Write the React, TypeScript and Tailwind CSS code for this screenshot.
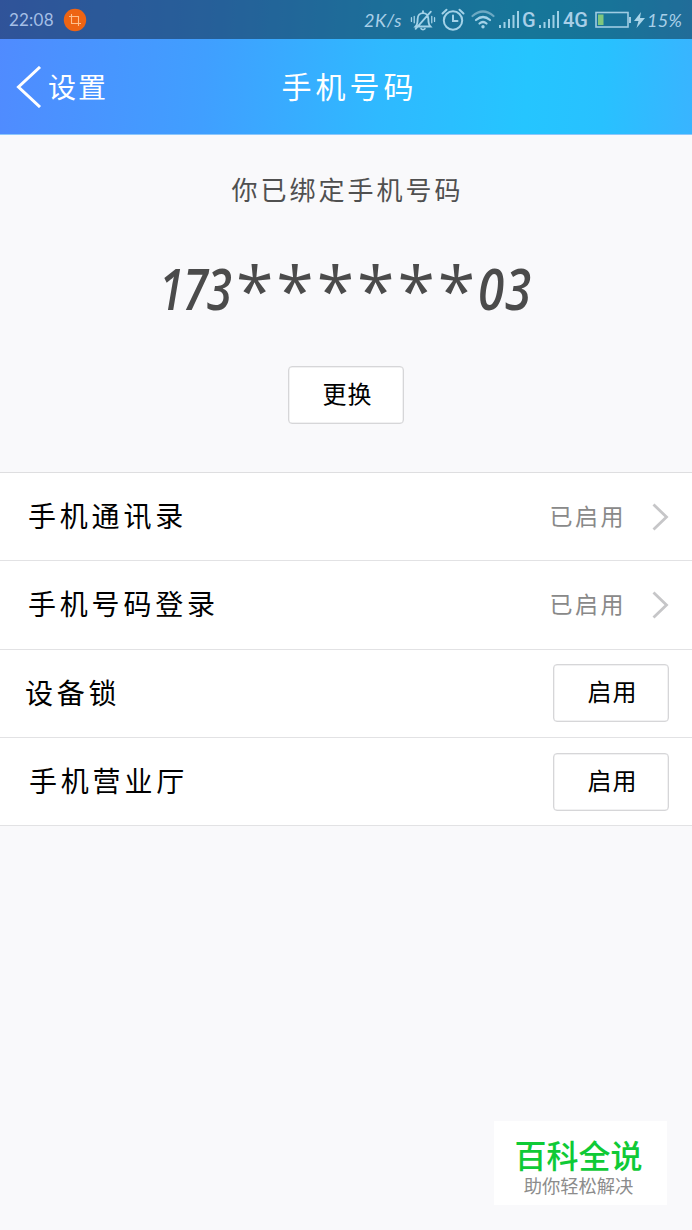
import React from "react";

const hand = "font-['Noto_Sans_CJK_SC',sans-serif]";

function Signal() {
  return (
    <svg width="21" height="20" viewBox="0 0 21 20" fill="#9fd0e6" className="shrink-0">
      <rect x="0" y="15" width="2" height="3" />
      <rect x="4.5" y="12" width="2" height="6" />
      <rect x="9" y="9" width="2" height="9" />
      <rect x="13.5" y="5" width="2" height="13" />
      <rect x="18" y="1" width="2" height="17" />
    </svg>
  );
}

function StatusBar() {
  return (
    <div className="flex h-[39px] items-center bg-black/40 pl-[9px] text-[#a9cfe8]">
      <span className="w-[54px] whitespace-nowrap font-['Lato',sans-serif] text-[17px] leading-none tracking-[0.2px] text-[#a5bfe6]">22:08</span>
      <svg width="24" height="24" viewBox="0 0 24 24" fill="none" className="shrink-0">
        <circle cx="12" cy="12" r="11.2" fill="#ee6413" />
        <path d="M8.500 6v9.500H18M6 8.500h9.500V18" stroke="#ffc08c" strokeWidth="1.1" />
      </svg>
      <span className="ml-[277px] w-[46px] whitespace-nowrap font-['Lato',sans-serif] text-[18px] italic leading-none tracking-[0.6px]">2K/s</span>
      <svg width="26" height="24" viewBox="0 0 28 26" fill="none" stroke="#a3d2e8" strokeWidth="2" strokeLinecap="round" className="shrink-0">
        <path d="M6 20c2-2 2.200-4 2.200-8 0-4 2.500-6.500 5.800-6.500s5.800 2.500 5.800 6.500c0 4 .2 6 2.200 8zM12 22.500c1 1.200 3 1.200 4 0M14 5.500V3.500M6 22.500 22.500 4" />
        <path d="M4.500 9v7M1.500 10.500v4M23.500 9v7M26.500 10.500v4" strokeWidth="1.4" />
      </svg>
      <svg width="24" height="24" viewBox="0 0 24 24" fill="none" stroke="#a3d2e8" strokeWidth="2" strokeLinecap="round" className="ml-[5px] shrink-0">
        <circle cx="12" cy="12.500" r="9.200" />
        <path d="M12 7.500V13h4.500M1.500 5.500 5.500 1.700M22.500 5.500 18.500 1.700" />
      </svg>
      <svg width="24" height="20" viewBox="0 0 24 20" fill="none" strokeWidth="2.200" strokeLinecap="round" className="ml-[6px] shrink-0">
        <path d="M1.500 6Q12-3 22.500 6" stroke="#6ca9c3" />
        <path d="M5 10Q12 4 19 10M8.500 13.500Q12 10.500 15.500 13.500" stroke="#a3d2e8" />
        <circle cx="12" cy="16.800" r="1.700" fill="#a3d2e8" />
      </svg>
      <span className="ml-[4px] flex items-center"><Signal /></span>
      <span className="ml-[2px] w-[17px] font-['Roboto',sans-serif] text-[20px] font-medium leading-none">G</span>
      <Signal />
      <span className="ml-[3px] w-[30px] font-['Roboto',sans-serif] text-[20px] font-medium leading-none">4G</span>
      <svg width="37" height="18" viewBox="0 0 37 18" fill="none" className="ml-[2px] shrink-0">
        <rect x="1" y="1.500" width="32" height="14.500" stroke="#9fcce3" strokeWidth="1.600" />
        <rect x="3" y="3.500" width="5.500" height="10.500" fill="#7fc77e" />
        <path d="M35 6v6" stroke="#9fcce3" strokeWidth="2" />
      </svg>
      <svg width="11" height="18" viewBox="0 0 11 18" fill="#a9d4e8" className="ml-[2px] shrink-0">
        <path d="M7 1 0 10h4.500L2.500 17 11 7H6z" />
      </svg>
      <span className="ml-[2px] whitespace-nowrap font-['Lato',sans-serif] text-[18px] italic leading-none tracking-[0.3px]">15%</span>
    </div>
  );
}

function ActionButton({ children }: { children: React.ReactNode }) {
  return (
    <button className={`${hand} flex h-[58px] w-[116px] items-center justify-center rounded-[4px] border-[1.500px] border-[#d6d6d8] bg-white pb-[4px] pl-[3px] text-[24px] font-normal leading-none tracking-[1px] text-black shadow-[inset_0_0_0_0.500px_#e4e4e6]`}>
      {children}
    </button>
  );
}

function Row({ label, enabled = false, inset = "pl-[28px]" }: { label: string; enabled?: boolean; inset?: string }) {
  return (
    <div className={`flex h-[88.300px] items-center justify-between border-b-[1.500px] border-[#e2e2e4] pr-[23px] ${inset}`}>
      <span className={`${hand} pb-[3px] text-[28px] leading-none tracking-[3.800px] text-black`}>{label}</span>
      {enabled ? (
        <span className="flex items-center">
          <span className={`${hand} mr-[26px] pb-[2px] text-[23px] leading-none tracking-[2.500px] text-[#898989]`}>已启用</span>
          <svg width="17" height="28" viewBox="0 0 17 28" fill="none" stroke="#c6c6c8" strokeWidth="2.800">
            <path d="M1.500 1.500 14.500 14 1.500 26.500" />
          </svg>
        </span>
      ) : (
        <ActionButton>启用</ActionButton>
      )}
    </div>
  );
}

export default function App() {
  return (
    <div className="flex h-[1230px] w-[692px] flex-col overflow-hidden bg-[#f9f9fb]">
      <header className="h-[135px] shrink-0 border-b border-[#8dc7fb] bg-[linear-gradient(94deg,#508bff_0%,#409fff_30%,#2fb9ff_55%,#25c5ff_76%,#28c1ff_87%,#39b4ff_100%)]">
        <StatusBar />
        <div className="grid h-[95px] grid-cols-[1fr_auto_1fr] items-center">
          <div className="flex items-center pl-[16px]">
            <svg width="26" height="42" viewBox="0 0 26 42" fill="none" stroke="white" strokeWidth="3">
              <path d="M24 1 2.500 21 24 41" />
            </svg>
            <span className={`${hand} ml-[6px] pb-[2px] text-[28px] leading-none tracking-[2px] text-white`}>设置</span>
          </div>
          <h1 className={`${hand} pb-[4px] pl-[7px] text-[30px] font-normal leading-none tracking-[4px] text-white`}>手机号码</h1>
          <span />
        </div>
      </header>

      <section className="flex h-[337px] shrink-0 flex-col items-center">
        <p className={`${hand} mt-[40px] whitespace-nowrap pl-[3px] text-[26px] leading-[28px] tracking-[3px] text-[#505050]`}>你已绑定手机号码</p>
        <p className="mt-[54px] flex h-[62px] w-[374px] items-center whitespace-nowrap text-[#4b4b4b]">
          <span className="w-[77px]">
            <span className="inline-block origin-left scale-x-[0.8] font-['Open_Sans',sans-serif] text-[57px] font-semibold italic leading-[62px] tracking-[-1.500px]">173</span>
          </span>
          <span className="w-[242px] pt-[4px] font-['Open_Sans',sans-serif] text-[68px] leading-[62px] tracking-[2.900px]">******</span>
          <span className="inline-block origin-left scale-x-[0.83] font-['Open_Sans',sans-serif] text-[57px] font-semibold italic leading-[62px] tracking-[1px]">03</span>
        </p>
        <div className="mt-[47px]"><ActionButton>更换</ActionButton></div>
      </section>

      <main className="shrink-0 border-t border-[#dedee0] bg-white">
        <Row label="手机通讯录" enabled />
        <Row label="手机号码登录" enabled />
        <Row label="设备锁" inset="pl-[25px]" />
        <Row label="手机营业厅" inset="pl-[29px]" />
      </main>

      <aside className="mb-[25px] mr-[25px] mt-auto flex h-[84px] w-[173px] flex-col items-center self-end bg-white pt-[16px] font-['Noto_Sans_CJK_SC',sans-serif]">
        <strong className="pr-[4px] text-[32px] font-medium leading-[34px] text-[#0fca36]">百科全说</strong>
        <span className="mt-[2px] pr-[4px] text-[18.300px] leading-[25px] text-[#8c8c8c]">助你轻松解决</span>
      </aside>
    </div>
  );
}
